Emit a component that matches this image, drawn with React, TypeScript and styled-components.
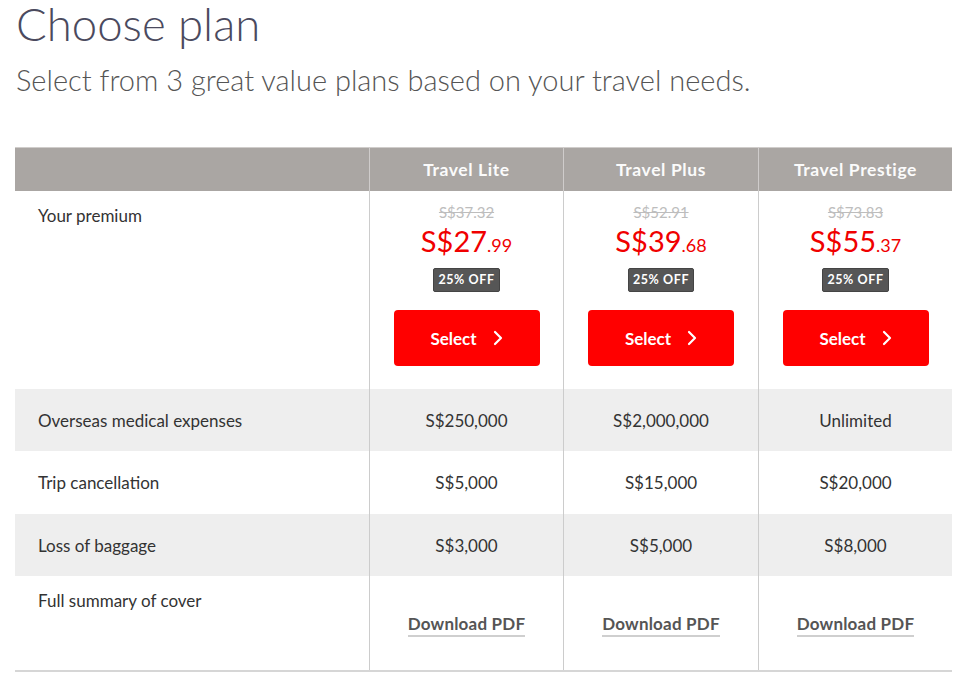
import styled, { createGlobalStyle } from 'styled-components';

const GlobalStyle = createGlobalStyle`
	body {
		margin: 0;
		background: #fff;
		font-family: Lato, 'Open Sans', sans-serif;
		color: #333;
	}
	* {
		box-sizing: border-box;
	}
`;

const Page = styled.div`
	padding: 0 28px 0 15px;
`;

const Title = styled.h1`
	margin: 0;
	font-size: 45.5px;
	line-height: 48px;
	font-weight: 300;
	color: #4b4a5e;
	padding-left: 1px;
`;

const Subtitle = styled.p`
	margin: 12px 0 0;
	font-size: 29px;
	line-height: 40px;
	font-weight: 300;
	color: #555;
	padding-left: 1px;
`;

const Table = styled.div`
	margin-top: 47px;
	display: grid;
	grid-template-columns: 354px 194px 195px 194px;
	border-bottom: 2px solid #d6d6d6;
`;

const HeadCell = styled.div<{ first?: boolean }>`
	height: 44px;
	background: #aaa6a3;
	border-top: 1px solid #d0cdcb;
	border-left: ${(p) => (p.first ? 'none' : '1px solid #cfcccb')};
	color: #fbfbfb;
	font-size: 17.5px;
	font-weight: 700;
	letter-spacing: 0.6px;
	display: flex;
	align-items: center;
	justify-content: center;
`;

const LabelCell = styled.div<{ shaded?: boolean; top?: boolean }>`
	background: ${(p) => (p.shaded ? '#eeeeee' : '#fff')};
	padding: ${(p) => (p.top ? '14px 0 0 23px' : '0 0 0 23px')};
	display: flex;
	align-items: ${(p) => (p.top ? 'flex-start' : 'center')};
	font-size: 17px;
	color: #333;
`;

const ValueCell = styled.div<{ shaded?: boolean; height: number }>`
	height: ${(p) => p.height}px;
	background: ${(p) => (p.shaded ? '#eeeeee' : '#fff')};
	border-left: 1px solid #cccccc;
	display: flex;
	flex-direction: column;
	align-items: center;
	justify-content: center;
	font-size: 17px;
	color: #333;
`;

const PriceCell = styled.div`
	height: 198px;
	border-left: 1px solid #cccccc;
	display: flex;
	flex-direction: column;
	align-items: center;
	padding-top: 12px;
`;

const OldPrice = styled.div`
	font-size: 15px;
	line-height: 18px;
	color: #bdbdbd;
	text-decoration: line-through;
`;

const NewPrice = styled.div`
	color: #f00000;
	font-size: 29px;
	line-height: 36px;
	margin-top: 2px;
	small {
		font-size: 18px;
	}
`;

const Badge = styled.div`
	margin-top: 5px;
	background: #565656;
	color: #fff;
	font-size: 12.5px;
	font-weight: 700;
	letter-spacing: 0.6px;
	line-height: 20px;
	padding: 1px 4px;
	border: 1px solid #444;
	border-radius: 2px;
`;

const SelectButton = styled.button`
	margin-top: 18px;
	width: 146px;
	height: 56px;
	border: none;
	border-radius: 4px;
	background: #ff0000;
	color: #fff;
	font-family: inherit;
	font-size: 17px;
	font-weight: 700;
	display: flex;
	align-items: center;
	justify-content: center;
	gap: 16px;
	cursor: pointer;
`;

const DownloadLink = styled.a`
	margin-top: 4px;
	font-size: 17px;
	font-weight: 700;
	color: #555;
	text-decoration: none;
	border-bottom: 2px solid #cfcfcf;
	padding-bottom: 1px;
	letter-spacing: 0.2px;
`;

const plans = [
	{ name: 'Travel Lite', old: 'S$37.32', main: 'S$27', cents: '.99' },
	{ name: 'Travel Plus', old: 'S$52.91', main: 'S$39', cents: '.68' },
	{ name: 'Travel Prestige', old: 'S$73.83', main: 'S$55', cents: '.37' },
];

const rows = [
	{ label: 'Overseas medical expenses', values: ['S$250,000', 'S$2,000,000', 'Unlimited'], shaded: true },
	{ label: 'Trip cancellation', values: ['S$5,000', 'S$15,000', 'S$20,000'], shaded: false },
	{ label: 'Loss of baggage', values: ['S$3,000', 'S$5,000', 'S$8,000'], shaded: true },
];

const Chevron = () => (
	<svg width='10' height='16' viewBox='0 0 10 16' fill='none'>
		<path d='M2 2l6 6-6 6' stroke='#fff' strokeWidth='2.2' strokeLinecap='round' strokeLinejoin='round' />
	</svg>
);

const App = () => {
	return (
		<Page>
			<GlobalStyle />
			<Title>Choose plan</Title>
			<Subtitle>Select from 3 great value plans based on your travel needs.</Subtitle>
			<Table>
				<HeadCell first />
				{plans.map((p) => (
					<HeadCell key={p.name}>{p.name}</HeadCell>
				))}

				<LabelCell top>Your premium</LabelCell>
				{plans.map((p) => (
					<PriceCell key={p.name}>
						<OldPrice>{p.old}</OldPrice>
						<NewPrice>
							{p.main}
							<small>{p.cents}</small>
						</NewPrice>
						<Badge>25% OFF</Badge>
						<SelectButton>
							Select
							<Chevron />
						</SelectButton>
					</PriceCell>
				))}

				{rows.map((r) => [
					<LabelCell key={r.label} shaded={r.shaded}>
						{r.label}
					</LabelCell>,
					...r.values.map((v, i) => (
						<ValueCell key={r.label + i} shaded={r.shaded} height={r.shaded ? 62 : 63}>
							{v}
						</ValueCell>
					)),
				])}

				<LabelCell top>Full summary of cover</LabelCell>
				{plans.map((p) => (
					<ValueCell key={p.name + 'pdf'} height={94}>
						<DownloadLink href='#'>Download PDF</DownloadLink>
					</ValueCell>
				))}
			</Table>
		</Page>
	);
};

export default App;
